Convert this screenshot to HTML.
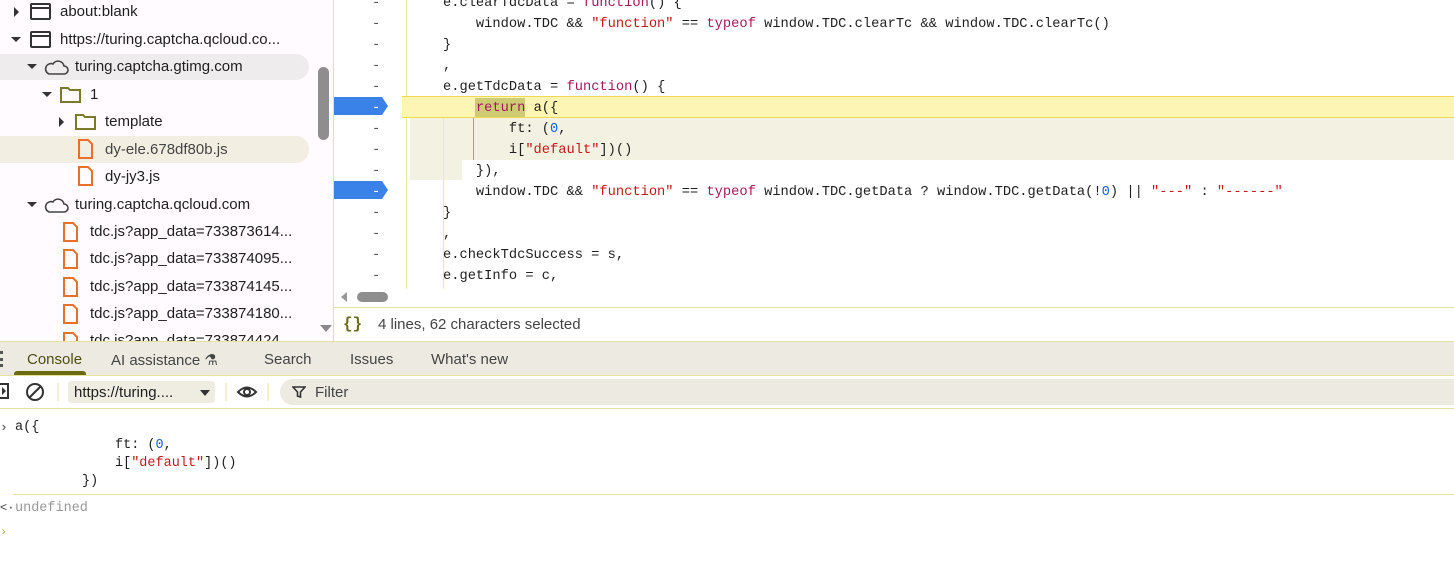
<!DOCTYPE html>
<html><head><meta charset="utf-8"><style>
*{margin:0;padding:0;box-sizing:border-box}
body{width:1454px;height:588px;overflow:hidden;background:#fff;font-family:"Liberation Sans",sans-serif;position:relative;color:#1f1f1f}
.a{position:absolute;white-space:pre}
.t{font-size:15px}
.m{font-family:"Liberation Mono",monospace;font-size:13.72px}
.k{color:#a3195c}.s{color:#c41a16}.n{color:#1a5fd6}
.tri{position:absolute;width:0;height:0}
</style></head><body>
<!-- left panel -->
<div class="a" style="left:0;top:0;width:333px;height:341px;background:#fffbfe"></div>
<div class="a" style="left:0;top:54px;width:309px;height:26px;background:#efecee;border-radius:0 13px 13px 0"></div>
<div class="a" style="left:0;top:136px;width:309px;height:27px;background:#f2efe2;border-radius:0 13px 13px 0"></div>
<div class="a" style="left:318px;top:67px;width:11px;height:73px;background:#8e8e8e;border-radius:6px"></div>
<div class="tri" style="left:320px;top:325px;border-left:6px solid transparent;border-right:6px solid transparent;border-top:7px solid #8a8a8a"></div>
<svg class="a" style="left:0;top:0" width="320" height="341">
<g fill="#333"><path d="M14 7l5 5-5 5z"/><path d="M11 37h10l-5 5z"/><path d="M27 64h10l-5 5z"/><path d="M42 92h10l-5 5z"/><path d="M59 117l5 5-5 5z"/><path d="M27 202h10l-5 5z"/></g>
<g fill="none" stroke="#333" stroke-width="2"><rect x="31" y="4" width="19" height="15" rx="1"/><path d="M31 8h19"/><rect x="31" y="32" width="19" height="15" rx="1"/><path d="M31 36h19"/></g>
<g fill="none" stroke="#444" stroke-width="1.6"><path d="M49 74h15a4 4 0 0 0 0-8 6 6 0 0 0-11-2 5 5 0 0 0-4 10z"/><path d="M49 212h15a4 4 0 0 0 0-8 6 6 0 0 0-11-2 5 5 0 0 0-4 10z"/></g>
<g fill="none" stroke="#7a7a2a" stroke-width="2"><path d="M61 88h7l2 2h10v12h-19z"/><path d="M76 115h7l2 2h10v12h-19z"/></g>
<g fill="none" stroke="#e8702a" stroke-width="2"><path d="M79 140h9l4 4v14h-13z"/><path d="M79 167h9l4 4v14h-13z"/><path d="M64 223h9l4 4v14h-13z"/><path d="M64 250h9l4 4v14h-13z"/><path d="M64 278h9l4 4v14h-13z"/><path d="M64 305h9l4 4v14h-13z"/><path d="M64 333h9l4 4v14h-13z"/></g>
</svg>
<div class="a t" style="left:60px;top:3px">about:blank</div>
<div class="a t" style="left:60px;top:31px">https://turing.captcha.qcloud.co...</div>
<div class="a t" style="left:75px;top:58px">turing.captcha.gtimg.com</div>
<div class="a t" style="left:90px;top:86px">1</div>
<div class="a t" style="left:105px;top:113px">template</div>
<div class="a t" style="left:105px;top:141px;color:#444">dy-ele.678df80b.js</div>
<div class="a t" style="left:105px;top:168px">dy-jy3.js</div>
<div class="a t" style="left:75px;top:196px">turing.captcha.qcloud.com</div>
<div class="a t" style="left:90px;top:223px">tdc.js?app_data=733873614...</div>
<div class="a t" style="left:90px;top:250px">tdc.js?app_data=733874095...</div>
<div class="a t" style="left:90px;top:278px">tdc.js?app_data=733874145...</div>
<div class="a t" style="left:90px;top:305px">tdc.js?app_data=733874180...</div>
<div class="a t" style="left:90px;top:332px;height:9px;overflow:hidden">tdc.js?app_data=733874424...</div>
<div class="a" style="left:333px;top:0;width:1px;height:341px;background:#e5e29a"></div>
<!-- editor -->
<div class="a" style="left:406px;top:0;width:1px;height:289px;background:#eee8a8"></div>
<div class="a" style="left:402px;top:96px;width:1052px;height:22px;background:#fdf5b4;border-top:1px solid #f0d850;border-bottom:1px solid #f0d850"></div>
<div class="a" style="left:410px;top:118px;width:1044px;height:42px;background:#f3f1e2"></div>
<div class="a" style="left:410px;top:160px;width:52px;height:20px;background:#f3f1e2"></div>
<div class="a" style="left:475px;top:98px;width:50px;height:19px;background:#cfcb74"></div>
<div class="a" style="left:473px;top:118px;width:1px;height:42px;background:#b0a840"></div>
<div class="a" style="left:443px;top:118px;width:1px;height:171px;background:#efe9b0"></div>
<svg class="a" style="left:334px;top:97px" width="56" height="106"><path d="M0 0h48l6 9-6 9H0z" fill="#3b82e8"/><path d="M0 84h48l6 9-6 9H0z" fill="#3b82e8"/></svg>
<div class="a m" style="left:372px;top:-7px;line-height:21px;color:#555">-
-
-
-
-
<span style="color:#fff">-</span>
-
-
-
<span style="color:#fff">-</span>
-
-
-
-</div>
<div class="a m" style="left:443px;top:-7px;line-height:21px">e.clearTdcData = <span class="k">function</span>() {
    window.TDC &amp;&amp; <span class="s">"function"</span> == <span class="k">typeof</span> window.TDC.clearTc &amp;&amp; window.TDC.clearTc()
}
,
e.getTdcData = <span class="k">function</span>() {
    <span class="k">return</span> a({
        ft: (<span class="n">0</span>,
        i[<span class="s">"default"</span>])()
    }),
    window.TDC &amp;&amp; <span class="s">"function"</span> == <span class="k">typeof</span> window.TDC.getData ? window.TDC.getData(!<span class="n">0</span>) || <span class="s">"---"</span> : <span class="s">"------"</span>
}
,
e.checkTdcSuccess = s,
e.getInfo = c,</div>
<div class="tri" style="left:341px;top:292px;border-top:5px solid transparent;border-bottom:5px solid transparent;border-right:6px solid #999"></div>
<div class="a" style="left:357px;top:292px;width:31px;height:10px;background:#8e8e8e;border-radius:5px"></div>
<div class="a" style="left:334px;top:307px;width:1120px;height:1px;background:#e5e29a"></div>
<div class="a m" style="left:343px;top:315px;font-size:16px;font-weight:bold;color:#6b6b1a">{}</div>
<div class="a t" style="left:378px;top:316px;color:#444">4 lines, 62 characters selected</div>
<!-- drawer tabs -->
<div class="a" style="left:0;top:341px;width:1454px;height:35px;background:#edeae1;border-top:1px solid #e5e29a;border-bottom:1px solid #e5e29a"></div>
<div class="a" style="left:0;top:351px;width:3px;height:16px;border-left:3px dotted #555"></div>
<div class="a t" style="left:27px;top:351px;color:#4e4e10">Console</div>
<div class="a" style="left:14px;top:371px;width:72px;height:4px;background:#6b6a10;border-radius:3px 3px 0 0"></div>
<div class="a t" style="left:111px;top:351px;color:#444">AI assistance ⚗</div>
<div class="a t" style="left:264px;top:351px;color:#444">Search</div>
<div class="a t" style="left:350px;top:351px;color:#444">Issues</div>
<div class="a t" style="left:431px;top:351px;color:#444">What's new</div>
<!-- toolbar -->
<div class="a" style="left:0;top:408px;width:1454px;height:1px;background:#e5e29a"></div>
<svg class="a" style="left:0;top:380px" width="270" height="26">
<path d="M-3 4h11v14h-11" fill="none" stroke="#333" stroke-width="2"/><path d="M2 7l4 4-4 4z" fill="#333"/>
<circle cx="35" cy="12" r="8" fill="none" stroke="#333" stroke-width="2"/><path d="M29 18l12-12" stroke="#333" stroke-width="2"/>
<path d="M58 3v18" stroke="#e5e29a"/><path d="M226 3v18" stroke="#e5e29a"/><path d="M268 3v18" stroke="#e5e29a"/>
<path d="M238 12q9-9 18 0q-9 9-18 0z" fill="none" stroke="#333" stroke-width="2"/><circle cx="247" cy="12" r="3" fill="none" stroke="#333" stroke-width="2"/>
</svg>
<div class="a" style="left:68px;top:381px;width:147px;height:22px;background:#efede2;border-radius:3px"></div>
<div class="a t" style="left:74px;top:384px">https://turing....</div>
<div class="tri" style="left:200px;top:390px;border-left:5px solid transparent;border-right:5px solid transparent;border-top:6px solid #333"></div>
<div class="a" style="left:280px;top:379px;width:1174px;height:26px;background:#edeae1;border-radius:13px 0 0 13px"></div>
<svg class="a" style="left:292px;top:385px" width="14" height="14"><path d="M1 2h12l-4.5 5v5l-3-1v-4z" fill="none" stroke="#333" stroke-width="1.6"/></svg>
<div class="a t" style="left:315px;top:384px;color:#444">Filter</div>
<!-- console -->
<div class="a m" style="left:0;top:420px;font-size:13px;color:#444">›</div>
<div class="a m" style="left:15px;top:420px;font-size:13.5px">a({</div>
<div class="a m" style="left:115px;top:438px;font-size:13.5px">ft: (<span class="n">0</span>,</div>
<div class="a m" style="left:115px;top:456px;font-size:13.5px">i[<span class="s">"default"</span>])()</div>
<div class="a m" style="left:82px;top:474px;font-size:13.5px">})</div>
<div class="a" style="left:13px;top:494px;width:1441px;height:1px;background:#e5e29a"></div>
<div class="a m" style="left:0;top:501px;font-size:12px;color:#444">&lt;·</div>
<div class="a m" style="left:15px;top:501px;font-size:13.5px;color:#999">undefined</div>
<div class="a m" style="left:0;top:525px;font-size:12px;color:#b8b040">›</div>
</body></html>
